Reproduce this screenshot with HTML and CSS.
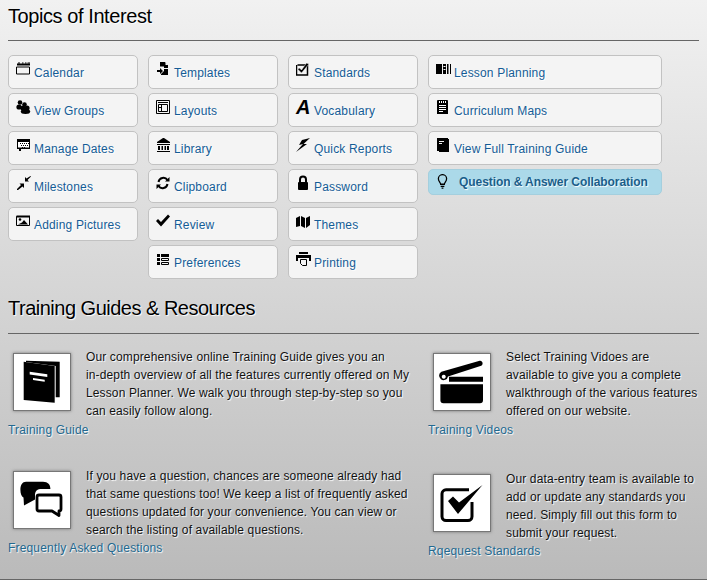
FILE: index.html
```html
<!DOCTYPE html>
<html lang="en">
<head>
<meta charset="utf-8">
<title>Topics of Interest</title>
<link rel="stylesheet" href="styles.css">
</head>
<body>
<main class="page">
  <h2 class="title">Topics of Interest</h2>
  <hr class="rule">
  <div class="topics">
    <div class="col">
      <a class="btn"><svg class="ic" viewBox="0 -1.500 16 16"><path d="M1 2h13v2H1z"/><path d="M2 1h2v1H2zM6 1h1.500v1H6zM9 1h1.500v1H9zM11.500 1H14v1h-2.500z"/><path fill="none" stroke="#000" d="M.5 5.500h13v7H.500z"/></svg><span>Calendar</span></a>
      <a class="btn"><svg class="ic" viewBox="0 -1 16 16"><circle cx="4" cy="3.500" r="2.300"/><circle cx="8.500" cy="5.500" r="2.300"/><circle cx="3" cy="8" r="2.600"/><circle cx="7" cy="9" r="2.600"/><circle cx="11" cy="9" r="2.600"/><ellipse cx="9.500" cy="12.500" rx="4.700" ry="2.500"/></svg><span>View Groups</span></a>
      <a class="btn"><svg class="ic" viewBox="0 -2 16 16"><path d="M1 1h13v10H5v2H3v-2H1z"/><path fill="#fff" d="M2 4h11v5.500H2z"/><path d="M4 5h1v1H4zM6 5h1v1H6zM8 5h1v1H8zM10 5h1v1h-1zM12 5h1v1h-1zM5 7h1v1H5zM7 7h1v1H7zM9 7h1v1H9zM11 7h1v1h-1zM6 9h1v1H6zM8 9h1v1H8z"/></svg><span>Manage Dates</span></a>
      <a class="btn"><svg class="ic" viewBox="0 -1 16 16"><path d="M1 15v-1l4-4-1.500-1.500H8v4.500L6.500 11.500 2 15z"/><path d="M14.500 1l.5.500-3.500 3.500 1.500 1.500H9V2l1.500 1.500z"/></svg><span>Milestones</span></a>
      <a class="btn"><svg class="ic" viewBox="0 -1 16 16"><path fill="none" stroke="#000" d="M.5 3.500h13v9H.500z"/><path d="M.5 2.500h13.500v2H.500z"/><circle cx="4" cy="6.500" r="1.300"/><path d="M2 11.500l4-2 2-2.500 4 4.500z"/></svg><span>Adding Pictures</span></a>
    </div>
    <div class="col">
      <a class="btn"><svg class="ic" viewBox="0 -1 16 16"><path d="M4 1h5l3 3v3H8V5.500H4z"/><path d="M9.500 1l3 3h-3z" fill="#f4f4f4"/><path d="M1 9h3V7l3 3-3 3v-2H1z"/><path d="M8 8h4v6H5v-1l3-3z"/></svg><span>Templates</span></a>
      <a class="btn"><svg class="ic" viewBox="0 -1 16 16"><path fill="none" stroke="#000" d="M.5 1.500h13v13H.500z"/><path fill="none" stroke="#000" d="M2.500 5.500h9v7h-9zM5.500 5.500v7M2.500 8.500h3"/><path d="M2 3h10v1H2z"/></svg><span>Layouts</span></a>
      <a class="btn"><svg class="ic" viewBox="0 -2 16 16"><path d="M7 0h1l6 4v1H1V4z"/><path d="M1 6h13v1H1zM2 8h2v4H2zM5.500 8h1.500v4H5.500zM8.500 8H10v4H8.500zM11 8h2v4h-2zM1 13h13v2H1z"/></svg><span>Library</span></a>
      <a class="btn"><svg class="ic" viewBox="0 0 16 16"><path fill="none" stroke="#000" stroke-width="2" d="M2.500 8a5 5 0 0 1 9-2M11.500 10a5 5 0 0 1-9 2"/><path d="M13.500 3v4.500h-4.500zM.5 15v-4.500h4.500z"/></svg><span>Clipboard</span></a>
      <a class="btn"><svg class="ic" viewBox="0 0 16 16"><path d="M0 9l2-2 3 3 7-7.500 2 2-9 10z"/></svg><span>Review</span></a>
      <a class="btn"><svg class="ic" viewBox="0 -3 16 16"><path d="M1 1h3v3H1zM1 5h3v3H1zM1 9h3v3H1zM5 1h8v3H5z"/><path fill="none" stroke="#000" d="M5.500 5.500h7v2h-7zM5.500 9.500h7v2h-7z"/></svg><span>Preferences</span></a>
    </div>
    <div class="col">
      <a class="btn"><svg class="ic" viewBox="0 0 16 16"><path fill="none" stroke="#000" stroke-width="1.500" d="M1.500 5h10v10h-11V5"/><path d="M3.500 8l2 2 5-7 2.500 1-7.500 9-4-4z" stroke="#f4f4f4" stroke-width=".5"/></svg><span>Standards</span></a>
      <a class="btn"><span class="ic-a">A</span><span>Vocabulary</span></a>
      <a class="btn"><svg class="ic" viewBox="0 0 16 16"><path d="M14 2L6 4 3 9l4-1-7 8 11-8H7.500z"/></svg><span>Quick Reports</span></a>
      <a class="btn"><svg class="ic" viewBox="0 0 16 16"><path fill="none" stroke="#000" stroke-width="2" d="M4 8V5.500a3 3 0 0 1 6 0V8"/><path d="M3 8h8a1 1 0 0 1 1 1v6a1 1 0 0 1-1 1H3a1 1 0 0 1-1-1V9a1 1 0 0 1 1-1z"/></svg><span>Password</span></a>
      <a class="btn"><svg class="ic" viewBox="0 -1 16 16"><path d="M0 5l4-2v10l-4 1zM5 3l4 2v10l-4-2zM10 5l4-2v9l-4 3z"/></svg><span>Themes</span></a>
      <a class="btn"><svg class="ic" viewBox="0 -1 16 16"><path d="M3 1h9v2H3zM0 4h15v6h-2V7H2v3H0z"/><path fill="none" stroke="#000" d="M4.500 8.500h6v6h-4l-2-2z"/></svg><span>Printing</span></a>
    </div>
    <div class="col col-wide">
      <a class="btn"><svg class="ic" viewBox="0 -2 16 16"><path d="M0 2h6v10H0zM7 2h3v10H7zM11 2h1.500v10H11zM14 2h1v10h-1z"/><path fill="#f4f4f4" d="M7.500 4h2v1h-2zM7.500 7h2v1h-2z"/></svg><span>Lesson Planning</span></a>
      <a class="btn"><svg class="ic" viewBox="0 -1 16 16"><path d="M2 1h9a1 1 0 0 1 1 1v13H1V2a1 1 0 0 1 1-1z"/><path fill="#fff" d="M3 6h7v1H3zM3 8h7v1H3zM3 10h7v1H3zM3 12h4v1H3z"/><path fill="#fff" d="M3 2h1v2H3zM5 2h1v2H5zM7 2h1v2H7zM9 2h1v2H9z"/></svg><span>Curriculum Maps</span></a>
      <a class="btn"><svg class="ic" viewBox="0 0 16 16"><path d="M1 2h11v1h1v13H3v-1H1z"/><path fill="#f4f4f4" d="M3 5h5v1H3zM3 7h3v1H3z"/></svg><span>View Full Training Guide</span></a>
      <a class="btn btn-q"><svg class="ic-bulb" viewBox="0 0 12 16"><path fill="none" stroke="#000" stroke-width="1.400" d="M4 11c0-2-2.500-3-2.500-6a4.500 4.500 0 0 1 9 0c0 3-2.500 4-2.500 6z"/><path d="M4 12.500h4V14H4zM5 14.500h2V16H5z"/></svg><span>Question &amp; Answer Collaboration</span></a>
    </div>
  </div>

  <h2 class="title title-2">Training Guides &amp; Resources</h2>
  <hr class="rule">
  <div class="guides">
    <section class="guide">
      <div class="guide-row">
        <div class="tile"><svg viewBox="0 0 56 56"><path d="M12 6.700l33.700 1v35.600h-4V12L12 8z"/><path d="M9.700 7.700l31 4.300v36.700l-31-2.700z"/><path fill="#fff" d="M15.700 17.700l17.600 2.600V23l-17.600-2.600zM19 24l11.700 1.700v2L19 26z"/></svg></div>
        <p>Our comprehensive online Training Guide gives you an<br>in-depth overview of all the features currently offered on My Lesson Planner. We walk you through step-by-step so you can easily follow along.</p>
      </div>
      <a class="guide-link">Training Guide</a>
    </section>
    <section class="guide">
      <div class="guide-row">
        <div class="tile"><svg viewBox="0 0 56 56"><path fill-rule="evenodd" d="M7.400 17.700L45.700 6.700c3-.5 4 4 1.500 5L14 22.500a4.500 4.500 0 1 1-6.600-4.800zM9.700 20.700a2 2 0 1 0 .1 0z"/><path d="M15 22.700h34v5H15zM6.400 30.300H49V46.300a3 3 0 0 1-3 3H9.400a3 3 0 0 1-3-3z"/></svg></div>
        <p>Select Training Vidoes are available to give you a complete walkthrough of the various features offered on our website.</p>
      </div>
      <a class="guide-link">Training Videos</a>
    </section>
    <section class="guide guide-faq">
      <div class="guide-row">
        <div class="tile"><svg viewBox="0 0 56 56"><path d="M12 9.700h17c5 0 7.400 3 7.400 7.300H26a6 6 0 0 0-5 5v5.500l-11 6-.5-8c-2-1-3.100-4-3.100-7.800 0-5 2-8 5.600-8z"/><path fill="none" stroke="#000" stroke-width="2.800" stroke-linejoin="round" d="M25 23h20a2 2 0 0 1 2 2v12a2 2 0 0 1-2 2v4.500L38 39H25a2 2 0 0 1-2-2V25a2 2 0 0 1 2-2z"/></svg></div>
        <p>If you have a question, chances are someone already had that same questions too! We keep a list of frequently asked questions updated for your convenience. You can view or search the listing of available questions.</p>
      </div>
      <a class="guide-link">Frequently Asked Questions</a>
    </section>
    <section class="guide guide-std">
      <div class="guide-row">
        <div class="tile"><svg viewBox="0 0 56 56"><path fill="none" stroke="#000" stroke-width="3" d="M35 14.800H12a4 4 0 0 0-4 4V41.500a4 4 0 0 0 4 4H34a4 4 0 0 0 4-4V27"/><path d="M14 26l5-4.500 6 6L48.500 10 24 39z"/></svg></div>
        <p>Our data-entry team is available to add or update any standards you need. Simply fill out this form to submit your request.</p>
      </div>
      <a class="guide-link">Rqequest Standards</a>
    </section>
  </div>
</main>
</body>
</html>
```
FILE: styles.css
```css
* { box-sizing: border-box; }
html, body { height: 100%; }
body {
  margin: 0;
  height: 580px;
  overflow: hidden;
  font-family: "Liberation Sans", Arial, sans-serif;
  font-size: 12px;
  color: #111;
  background: linear-gradient(to bottom, #f1f1f1 0%, #bababa 100%);
  border-bottom: 1px solid #666;
}
.page { padding: 0 8px; }
.title {
  margin: 0;
  padding-top: 5px;
  height: 40px;
  font-size: 20px;
  line-height: 23px;
  font-weight: normal;
  letter-spacing: -.42px;
  color: #000;
  text-shadow: 1px 1px 1px #fff;
}
.title-2 { margin-top: 16px; height: 38px; padding-top: 2px; letter-spacing: -.5px; }
.rule {
  margin: 0;
  height: 1px;
  border: 0;
  background: #666;
}
.topics {
  display: flex;
  gap: 10px;
  padding-top: 14px;
}
.col {
  display: flex;
  flex-direction: column;
  gap: 4px;
  width: 130px;
}
.col-wide { width: 234px; }
.btn {
  display: flex;
  align-items: flex-start;
  height: 34px;
  padding: 4px 0 0 7px;
  background: #f4f4f4;
  border: 1px solid #c2c2c2;
  border-radius: 5px;
  color: #145c96;
  font-size: 12px;
  letter-spacing: .17px;
  text-shadow: 1px 1px 1px #fff;
}
.btn span:last-child { padding-top: 6px; line-height: 14px; }
.ic { width: 16px; height: 16px; margin-right: 2px; flex: none; }
.btn .ic-a {
  width: 18px;
  height: 16px;
  padding: 0;
  font: italic bold 20px/18px "Liberation Sans", Arial, sans-serif;
  color: #000;
  text-shadow: none;
  flex: none;
  letter-spacing: 0;
}
.btn-q {
  height: 26px;
  background: #abd9e9;
  border-color: #a4cfde;
  padding: 3px 0 0 8px;
  font-weight: bold;
  font-size: 12px;
  letter-spacing: -.07px;
  color: #1a5e8a;
}
.btn-q span:last-child { padding-top: 2px; }
.ic-bulb { width: 11px; height: 15px; margin: 1px 11px 0 0; flex: none; }
.guides {
  display: grid;
  grid-template-columns: 420px 270px;
  padding-top: 19px;
}
.guide { height: 118px; }
.guide-faq, .guide-std { height: 110px; }
.guide-std { padding-top: 3px; }
.guide-row {
  display: flex;
  padding-left: 5px;
  height: 59px;
}
.guide-row p {
  margin: -4px 0 0 15px;
  width: 325px;
  line-height: 18px;
  letter-spacing: .13px;
  text-shadow: 1px 1px 1px #fff;
}
.guide:nth-child(-n+2) .guide-row p { margin-top: -5px; }
.guide:nth-child(even) .guide-row p { width: 195px; }
.tile {
  width: 58px;
  height: 58px;
  flex: none;
  background: #fff;
  border: 1px solid #777;
  box-shadow: 0 0 3px #777;
}
.tile svg { display: block; width: 56px; height: 56px; }
.guide-link {
  display: block;
  margin-top: 10px;
  line-height: 16px;
  color: #22688f;
  letter-spacing: .17px;
  text-shadow: 1px 1px 1px #fff;
}
```
